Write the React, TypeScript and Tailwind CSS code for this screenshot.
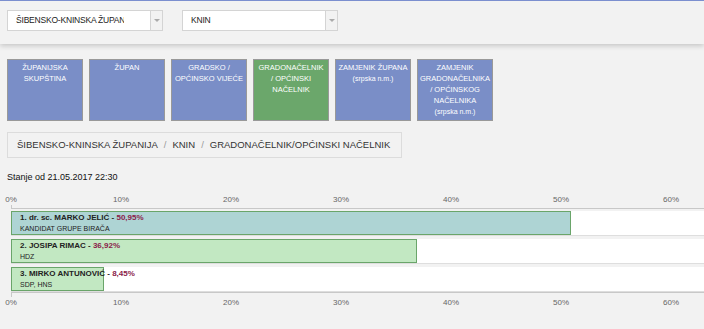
import React from "react";

const tiles = [
  { lines: ["ŽUPANIJSKA", "SKUPŠTINA"], active: false },
  { lines: ["ŽUPAN"], active: false },
  { lines: ["GRADSKO /", "OPĆINSKO VIJEĆE"], active: false },
  { lines: ["GRADONAČELNIK", "/ OPĆINSKI", "NAČELNIK"], active: true },
  { lines: ["ZAMJENIK ŽUPANA"], sub: "(srpska n.m.)", active: false },
  { lines: ["ZAMJENIK", "GRADONAČELNIKA", "/ OPĆINSKOG", "NAČELNIKA"], sub: "(srpska n.m.)", active: false },
];

const candidates = [
  { name: "1. dr. sc. MARKO JELIĆ", pct: 50.95, label: "50,95%", party: "KANDIDAT GRUPE BIRAČA", bar: "bg-[#aed4d4]" },
  { name: "2. JOSIPA RIMAC", pct: 36.92, label: "36,92%", party: "HDZ", bar: "bg-[#c2e8c2]" },
  { name: "3. MIRKO ANTUNOVIĆ", pct: 8.45, label: "8,45%", party: "SDP, HNS", bar: "bg-[#c2e8c2]" },
];

const ticks = ["0%", "10%", "20%", "30%", "40%", "50%", "60%"];

function Select({ value }: { value: string }) {
  return (
    <div className="flex h-[21px] w-[156px]">
      <div className="min-w-0 flex-1 border border-[#d4d4d4] bg-white pl-[8px] text-[8.5px] leading-[19px] tracking-[-0.2px] text-[#222]">
        <div className="w-[108px] overflow-hidden whitespace-nowrap">{value}</div>
      </div>
      <div className="flex w-[12px] items-center justify-center border border-l-0 border-[#d4d4d4] bg-[#f2f2f2]">
        <span className="h-0 w-0 border-x-[3px] border-t-[3px] border-x-transparent border-t-[#aaa]" />
      </div>
    </div>
  );
}

function Axis() {
  return (
    <div className="-ml-[55px] flex text-[8px] leading-[10px] text-[#666]">
      {ticks.map((t) => (
        <div key={t} className="w-[110px] shrink-0 text-center">
          {t}
        </div>
      ))}
    </div>
  );
}

export default function App() {
  return (
    <div className="h-[329px] w-[704px] overflow-hidden bg-[#f2f2f2] font-['Liberation_Sans',Arial,sans-serif]">
      {/* top bar with selects */}
      <header className="relative z-10 flex h-[44px] gap-[19px] border-t border-[#7b8fcf] bg-[#f2f2f2] px-[7px] pt-[9px] shadow-[0_2px_5px_rgba(0,0,0,0.18)]">
        <Select value="ŠIBENSKO-KNINSKA ŽUPANIJA" />
        <Select value="KNIN" />
      </header>

      {/* election type tiles */}
      <div className="mt-[15px] flex gap-[6px] px-[7px]">
        {tiles.map((t, i) => (
          <div
            key={i}
            className={`flex h-[62px] w-[76px] flex-col items-center border border-[#999] pt-[2px] text-center text-[7.5px] leading-[11px] text-white ${
              t.active ? "bg-[#6ba76b]" : "bg-[#7a8ec7]"
            }`}
          >
            {t.lines.map((l) => (
              <div key={l}>{l}</div>
            ))}
            {t.sub && <div className="text-[7px]">{t.sub}</div>}
          </div>
        ))}
      </div>

      {/* breadcrumb */}
      <div className="ml-[7px] mt-[11px] flex h-[26px] w-[395px] items-center gap-[6px] whitespace-nowrap border border-[#dcdcdc] px-[9px] text-[9.5px] text-[#333]">
        <span>ŠIBENSKO-KNINSKA ŽUPANIJA</span>
        <span className="text-[#999]">/</span>
        <span>KNIN</span>
        <span className="text-[#999]">/</span>
        <span>GRADONAČELNIK/OPĆINSKI NAČELNIK</span>
      </div>

      <div className="ml-[7px] mt-[13px] text-[9px] leading-[12px] text-[#111]">Stanje od 21.05.2017 22:30</div>

      {/* chart */}
      <div className="mt-[12px] pl-[11px]">
        <Axis />
        <div className="h-[4px] border-b border-l border-[#c8c8c8]" />
        <div className="flex flex-col gap-[3px] pt-[2px]">
          {candidates.map((c) => (
            <div key={c.name} className="flex h-[25px] border-b border-[#dedede] bg-white">
              <div
                className={`h-full shrink-0 whitespace-nowrap border border-[#6aa56a] ${c.bar} pl-[8px]`}
                style={{ width: `${c.pct * 11}px` }}
              >
                <div className="text-[8px] font-bold leading-[11px] text-[#222]">
                  {c.name} - <span className="text-[#8a1c4a]">{c.label}</span>
                </div>
                <div className="mt-[1px] text-[7px] leading-[9px] text-[#222]">{c.party}</div>
              </div>
            </div>
          ))}
        </div>
        <div className="h-[5px] border-l border-t border-[#c8c8c8]" />
        <div className="mt-[1px]">
          <Axis />
        </div>
      </div>
    </div>
  );
}
